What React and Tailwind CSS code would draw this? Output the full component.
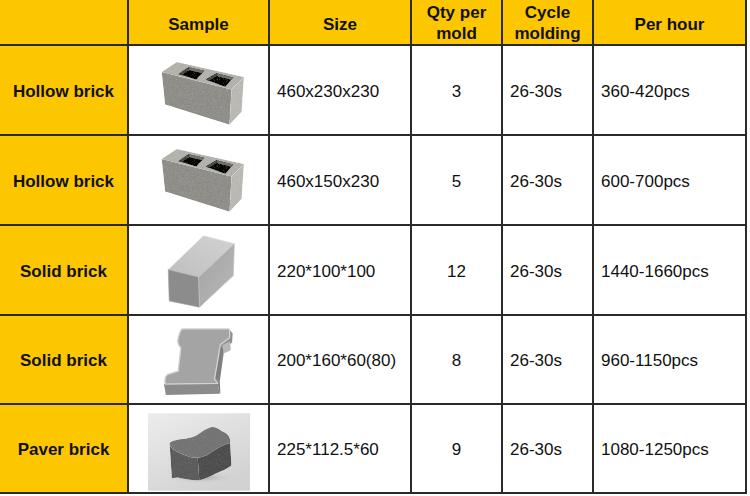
import React from 'react';

function Noise({ id, amount = 0.35 }) {
  return (
    <filter id={id} x="0" y="0" width="100%" height="100%">
      <feTurbulence type="fractalNoise" baseFrequency="0.9" numOctaves="2" seed="4" result="noise" />
      <feColorMatrix in="noise" type="saturate" values="0" result="gray" />
      <feComposite in="SourceGraphic" in2="gray" operator="arithmetic" k1="0" k2="1" k3={amount} k4={-amount / 2} result="mix" />
      <feComposite in="mix" in2="SourceAlpha" operator="in" />
    </filter>
  );
}

function HollowBlock({ id }) {
  return (
    <svg width="86" height="67" viewBox="90 55 256 198">
      <defs>
        <Noise id={id} amount={0.3} />
      </defs>
      <g filter={`url(#${id})`}>
        <polygon points="95,90 140,60 340,105 303,142" fill="#bebdb8" />
        <polygon points="95,90 303,142 297,247 105,187" fill="#9e9d99" />
        <polygon points="303,142 340,105 333,208 297,247" fill="#c4c3be" />
        <polygon points="145,96 175,76 222,86 198,112" fill="#444442" />
        <polygon points="226,112 258,94 308,106 284,134" fill="#444442" />
        <polygon points="175,76 222,86 215,94 177,85" fill="#858480" />
        <polygon points="258,94 308,106 301,113 260,103" fill="#858480" />
        <polygon points="145,96 175,76 177,85 154,100" fill="#6a6a67" />
        <polygon points="226,112 258,94 260,103 235,116" fill="#6a6a67" />
      </g>
    </svg>
  );
}

function SolidBrick() {
  return (
    <svg width="70" height="76" viewBox="105 30 215 232">
      <defs>
        <linearGradient id="sbTop" x1="0" y1="1" x2="1" y2="0">
          <stop offset="0" stopColor="#bfbfbf" />
          <stop offset="1" stopColor="#d2d2d2" />
        </linearGradient>
        <linearGradient id="sbRight" x1="0" y1="0" x2="1" y2="1">
          <stop offset="0" stopColor="#a3a3a3" />
          <stop offset="1" stopColor="#b8b8b8" />
        </linearGradient>
      </defs>
      <polygon points="112,142 220,38 315,62 205,165" fill="url(#sbTop)" stroke="#dcdcdc" strokeWidth="2" />
      <polygon points="112,142 205,165 208,257 115,238" fill="#8c8c8c" stroke="#a0a0a0" strokeWidth="2" />
      <polygon points="205,165 315,62 312,160 208,257" fill="url(#sbRight)" stroke="#c4c4c4" strokeWidth="2" />
    </svg>
  );
}

function IPaver() {
  return (
    <svg width="72" height="71" viewBox="90 35 222 215">
      <polygon points="96,212 262,212 268,242 102,246" fill="#8b8b8b" />
      <polygon points="298,44 308,56 306,84 282,104 270,92 296,72" fill="#8f8f8f" />
      <polygon points="270,92 282,104 268,204 252,196" fill="#7f7f7f" />
      <polygon points="262,212 252,196 268,204 270,240 268,242" fill="#7a7a7a" />
      <polygon points="276,92 300,80 302,108 280,118" fill="#b8b8b8" />
      <path
        d="M152,42 L296,42 Q300,44 298,70 L270,90 L252,196 L262,210 L100,212 Q96,190 108,182 L140,172 L148,100 Q135,88 140,70 Q145,48 152,42 Z"
        fill="#a4a4a4"
        stroke="#d2d2d2"
        strokeWidth="4"
        strokeLinejoin="round"
      />
    </svg>
  );
}

function PaverPhoto() {
  return (
    <svg width="102" height="78" viewBox="50 28 308 234">
      <defs>
        <linearGradient id="ppBg" x1="0" y1="0" x2="0.6" y2="1">
          <stop offset="0" stopColor="#ececec" />
          <stop offset="1" stopColor="#d2d2d2" />
        </linearGradient>
        <radialGradient id="ppShadow" cx="0.5" cy="0.5" r="0.5">
          <stop offset="0" stopColor="#a5a5a5" />
          <stop offset="1" stopColor="#d2d2d2" stopOpacity="0" />
        </radialGradient>
        <Noise id="ppNoise" amount={0.12} />
      </defs>
      <rect x="50" y="28" width="308" height="234" fill="url(#ppBg)" />
      <ellipse cx="210" cy="222" rx="105" ry="18" fill="url(#ppShadow)" />
      <g filter="url(#ppNoise)">
        <path
          d="M115,118 C130,105 160,108 185,100 C205,92 215,78 240,70 C255,66 265,78 280,85 C295,92 300,105 298,118 C280,122 265,130 250,140 C235,150 225,160 200,162 C175,165 150,150 130,140 C120,133 115,125 115,118 Z"
          fill="#7d7d7d"
        />
        <path
          d="M115,118 C115,125 120,133 130,140 C150,150 175,165 200,162 L205,230 C185,232 160,226 140,222 L122,224 Z"
          fill="#686868"
        />
        <path
          d="M200,162 C225,160 235,150 250,140 C265,130 280,122 298,118 L302,186 C290,196 270,204 255,210 C240,218 222,226 205,230 Z"
          fill="#5c5c5c"
        />
      </g>
    </svg>
  );
}

const rows = [
  { name: 'Hollow brick', img: <HollowBlock id="hb1" />, size: '460x230x230', qty: '3', cycle: '26-30s', hour: '360-420pcs', shift: 'ml-[8px] mt-[6px]' },
  { name: 'Hollow brick', img: <HollowBlock id="hb2" />, size: '460x150x230', qty: '5', cycle: '26-30s', hour: '600-700pcs', shift: 'ml-[8px] mt-[0px]' },
  { name: 'Solid brick', img: <SolidBrick />, size: '220*100*100', qty: '12', cycle: '26-30s', hour: '1440-1660pcs', shift: 'ml-[4px] mt-[2px]' },
  { name: 'Solid brick', img: <IPaver />, size: '200*160*60(80)', qty: '8', cycle: '26-30s', hour: '960-1150pcs', shift: 'ml-[-2px] mt-[4px]' },
  { name: 'Paver brick', img: <PaverPhoto />, size: '225*112.5*60', qty: '9', cycle: '26-30s', hour: '1080-1250pcs', shift: 'ml-[0px] mt-[6px]' },
];

export default function App() {
  const yellow = 'bg-[#fdc700]';
  return (
    <div className="w-[750px] h-[496px] bg-white overflow-hidden font-['Liberation_Sans',Arial,sans-serif] text-[#111]">
      <div className="grid w-[747px] grid-cols-[127px_139px_140px_89px_89px_151px] grid-rows-[44px_88px_88px_88px_87px_87px] gap-[2px] bg-[#2a2a2a] pr-[2px] pb-[2px]">
        <div className={yellow}></div>
        <div className={`${yellow} flex items-center justify-center text-[17px] font-bold pt-[5px]`}>Sample</div>
        <div className={`${yellow} flex items-center justify-center text-[17px] font-bold pt-[5px]`}>Size</div>
        <div className={`${yellow} flex flex-col items-center justify-center text-[17px] font-bold leading-[21px] pt-[1px]`}>
          <span>Qty per</span>
          <span>mold</span>
        </div>
        <div className={`${yellow} flex flex-col items-center justify-center text-[17px] font-bold leading-[21px] pt-[1px]`}>
          <span>Cycle</span>
          <span>molding</span>
        </div>
        <div className={`${yellow} flex items-center justify-center text-[17px] font-bold pt-[5px]`}>Per hour</div>

        {rows.map((r, i) => (
          <React.Fragment key={i}>
            <div className={`${yellow} flex items-center justify-center text-[17px] font-bold pt-[3px]`}>{r.name}</div>
            <div className="bg-white flex items-center justify-center">
              <div className={r.shift}>{r.img}</div>
            </div>
            <div className="bg-white flex items-center pl-[7px] text-[17px] pt-[3px]">{r.size}</div>
            <div className="bg-white flex items-center justify-center text-[17px] pt-[3px]">{r.qty}</div>
            <div className="bg-white flex items-center pl-[7px] text-[17px] pt-[3px]">{r.cycle}</div>
            <div className="bg-white flex items-center pl-[7px] text-[17px] pt-[3px]">{r.hour}</div>
          </React.Fragment>
        ))}
      </div>
    </div>
  );
}
